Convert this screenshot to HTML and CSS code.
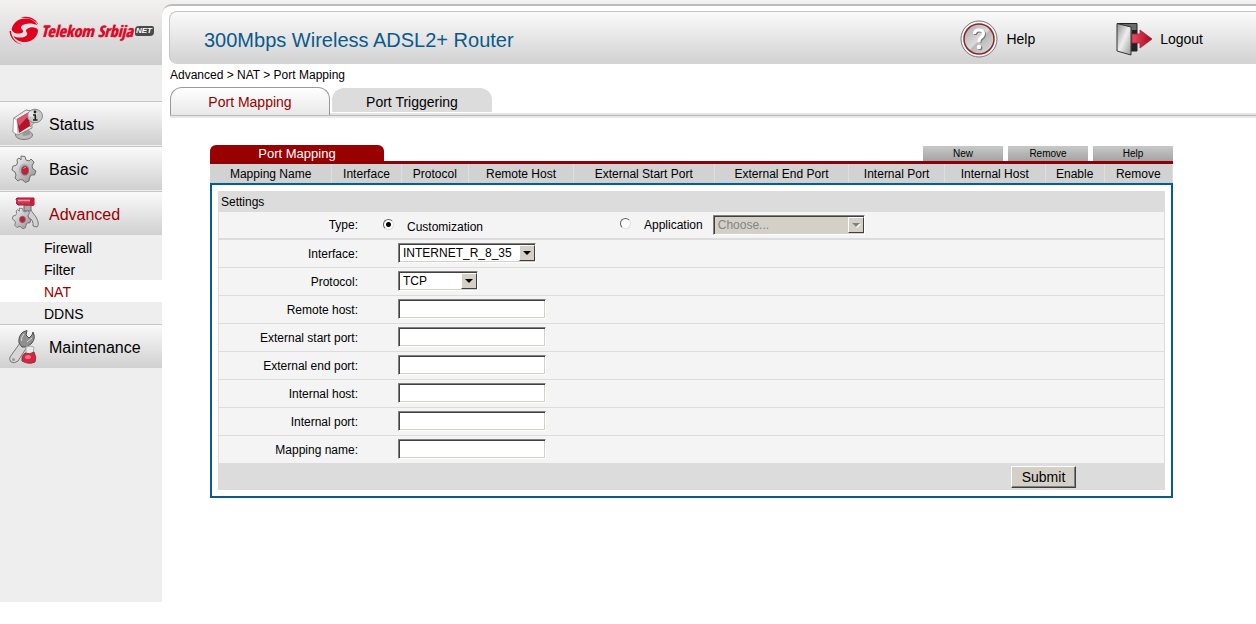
FILE: index.html
```html
<!DOCTYPE html>
<html lang="en">
<head>
<meta charset="utf-8">
<meta name="viewport" content="width=device-width, initial-scale=1">
<title>300Mbps Wireless ADSL2+ Router</title>
<link rel="stylesheet" href="styles.css">
</head>
<body>
<div class="page">
  <aside class="sidebar">
    <a class="logo" href="#">
      <svg class="logo-mark" width="31" height="30" viewBox="0 0 31 30" aria-hidden="true">
        <path fill="#e2001f" d="M2.500 13.500C4 7 9 2.500 16 2.500C22 2.500 26 5 28 9C23 6.500 15 7 12.500 10C10.500 13 16 14 13.500 16.500C11 18.500 4 18 2.500 13.500Z"/>
        <path fill="#e2001f" d="M29 14C29 20 24 25.500 17 26C11 26.500 6 23.500 4.500 20C9 22.500 16 22 18 19C19.500 16 15 15.500 18 13C21 10.500 27.500 10.500 29 14Z"/>
        <path fill="#e2001f" d="M.5 15C1 22 6 27.500 13.500 28.800C7 26.500 2.500 22 2 15ZM11 2C18-1 27 2 29.500 9C26.500 4.500 19 1 11 2Z"/>
      </svg>
      <span class="logo-name">Telekom Srbija</span>
      <span class="logo-net">NET</span>
    </a>
    <nav class="menu">
      <a class="menu-item" href="#">
        <svg width="34" height="34" viewBox="0 0 34 34" aria-hidden="true">
          <ellipse cx="15" cy="28" rx="8.500" ry="4.500" fill="#bdbdbd" stroke="#777"/>
          <path d="M13 24L20 21L21 28L14 29Z" fill="#999"/>
          <path d="M5 11L17 3L22 4L23 21L9 28L4 25Z" fill="#eee" stroke="#888"/>
          <path d="M4.500 11L8 13L9 28L4 25Z" fill="#fff" stroke="#999" stroke-width=".7"/>
          <path d="M8 12L20 5L21 19L10 26Z" fill="#b3142a"/>
          <path d="M8 12L20 5L20.300 8L10 19Z" fill="#d9566c"/>
          <path d="M22 14L21 20L26 15Z" fill="#c4c4c4" stroke="#888" stroke-width=".7"/>
          <ellipse cx="26" cy="9" rx="7.500" ry="6.800" fill="#c9c9c9" stroke="#888"/>
          <ellipse cx="24" cy="7" rx="4.500" ry="3" fill="#e6e6e6"/>
          <circle cx="26" cy="5" r="1.400" fill="#222"/>
          <path d="M24 8H26.300V12.500M24 13H28.500" stroke="#222" stroke-width="1.600" fill="none"/>
        </svg>
        <span>Status</span></a>
      <a class="menu-item" href="#">
        <svg width="34" height="34" viewBox="0 0 34 34" aria-hidden="true">
          <defs><linearGradient id="steel" x1="0" y1="0" x2="1" y2="1"><stop offset="0" stop-color="#fafafa"/><stop offset=".5" stop-color="#c4c4c4"/><stop offset="1" stop-color="#8c8c8c"/></linearGradient></defs>
          <path fill="url(#steel)" stroke="#707070" d="M12 4L16 4.500L17 8L20 9L22 7L25 10L23 14L24 17L27 19L25.500 23L22 23L20.500 26L20 29L16 30.500L14 28L11.500 27.500L9 29L6 26L7 23L6 20L3 18L4 14L7 13.500L8.500 11L8 7.500L10 6L12 8Z"/>
          <ellipse cx="15.500" cy="18" rx="5.500" ry="6.500" fill="#b2b2b2"/>
          <ellipse cx="16" cy="18.500" rx="3.500" ry="4.500" fill="#bd2236" stroke="#82646a"/>
          <path d="M14.500 17Q15 15 17 15.500" stroke="#ef8894" fill="none"/>
        </svg>
        <span>Basic</span></a>
      <a class="menu-item active" href="#">
        <svg width="34" height="34" viewBox="0 0 34 34" aria-hidden="true">
          <path d="M17 12L21 12L27 20Q31 27 28 30L24 29Q25 23 19 20Z" fill="#d2d2d2" stroke="#777"/>
          <rect x="15" y="8" width="7" height="6" rx="1" fill="#aaa" stroke="#666"/>
          <path d="M8 4Q6 2 8 1H25V8H9Q6 6 8 4Z" fill="#d92d4c" stroke="#9d1931"/>
          <path d="M9 3.500H23" stroke="#f59dab" stroke-width="1.500"/>
          <rect x="21" y="1" width="4" height="8" rx="1" fill="#c31f3b"/>
          <g transform="translate(1 8) scale(.78)">
            <path fill="url(#steel)" stroke="#666" d="M12 4L16 4.500L17 8L20 9L22 7L25 10L23 14L24 17L27 19L25.500 23L22 23L20.500 26L20 29L16 30.500L14 28L11.500 27.500L9 29L6 26L7 23L6 20L3 18L4 14L7 13.500L8.500 11L8 7.500L10 6L12 8Z"/>
            <ellipse cx="16" cy="18.500" rx="3.700" ry="4.200" fill="#c21f39" stroke="#82646a"/>
          </g>
        </svg>
        <span>Advanced</span></a>
      <ul class="submenu">
        <li><a href="#">Firewall</a></li>
        <li><a href="#">Filter</a></li>
        <li class="current"><a href="#">NAT</a></li>
        <li><a href="#">DDNS</a></li>
      </ul>
      <a class="menu-item" href="#">
        <svg width="34" height="34" viewBox="0 0 34 34" aria-hidden="true">
          <path d="M11 13L18 17L9 31Q5 34 2 32Q0 30 1 27Z" fill="#d6d6d6" stroke="#777"/>
          <path d="M10 13Q9 6 14 2L18 .5L17 5L20 8L23 5L24 2Q27 8 23 13L18 17L13 17Z" fill="#8f8f8f" stroke="#4e4e4e"/>
          <path d="M12.500 11Q12 7 15 4M18 12L23 8" stroke="#ddd" fill="none"/>
          <circle cx="4.500" cy="29.500" r="1.500" fill="#999"/>
          <path d="M17 17Q21 15 25 17L24 25H17Z" fill="#e9e9e9" stroke="#aaa"/>
          <path d="M16 23Q21 25 25 22Q28 28 26 32Q20 35 13 31Q12 26 16 23Z" fill="#d6253f" stroke="#8e3541"/>
          <ellipse cx="19" cy="27" rx="3" ry="2" fill="#ef7182"/>
        </svg>
        <span>Maintenance</span></a>
    </nav>
  </aside>

  <main class="main">
    <header class="header">
      <h1 class="title">300Mbps Wireless ADSL2+ Router</h1>
      <a class="action help" href="#">
        <svg width="38" height="38" viewBox="0 0 38 38" aria-hidden="true">
          <defs><linearGradient id="disc" x1="0" y1="0" x2="1" y2="1"><stop offset="0" stop-color="#a8a8a8"/><stop offset=".5" stop-color="#dadada"/><stop offset=".55" stop-color="#b8b8b8"/><stop offset="1" stop-color="#e2e2e2"/></linearGradient></defs>
          <circle cx="19" cy="19" r="18" fill="#f8f8f8" stroke="#777"/>
          <circle cx="19" cy="19" r="15" fill="url(#disc)" stroke="#8b252b" stroke-width="1.500"/>
          <path d="M15.500 15Q15.500 11 20 11Q24.500 11 24.500 14.500Q24.500 17 21.500 19Q20 20 20 23" fill="none" stroke="#777" stroke-width="3"/>
          <path d="M14.500 14Q14.500 10 19 10Q23.500 10 23.500 13.500Q23.500 16 20.500 18Q19 19 19 22.500" fill="none" stroke="#fff" stroke-width="3"/>
          <circle cx="20" cy="28" r="2.300" fill="#777"/><circle cx="19" cy="27" r="2.200" fill="#fff"/>
        </svg>
        Help</a>
      <a class="action" href="#">
        <svg width="38" height="34" viewBox="0 0 38 34" aria-hidden="true">
          <defs><linearGradient id="door" x1="0" y1="0" x2="1" y2="1"><stop offset="0" stop-color="#909090"/><stop offset=".5" stop-color="#eee"/><stop offset="1" stop-color="#999"/></linearGradient><linearGradient id="arrow"><stop offset="0" stop-color="#ee4b66"/><stop offset="1" stop-color="#a3061d"/></linearGradient></defs>
          <path d="M1 1.500H21V29H12V5Z" fill="#6b6b6b" stroke="#222"/>
          <path d="M16 8H21V29H15Z" fill="#222"/>
          <path d="M1 1.500L15 5V33L1 29Z" fill="url(#door)" stroke="#333"/>
          <path d="M16 12H24V8L36 17L24 26V21H16Z" fill="url(#arrow)" stroke="#a92438" stroke-width=".8"/>
        </svg>
        Logout</a>
    </header>

    <div class="breadcrumb">Advanced &gt; NAT &gt; Port Mapping</div>

    <nav class="tabs">
      <a class="tab selected" href="#">Port Mapping</a>
      <a class="tab" href="#">Port Triggering</a>
    </nav>

    <section class="panel">
      <div class="panel-top">
        <h2 class="panel-title">Port Mapping</h2>
        <div class="panel-buttons">
          <button type="button">New</button>
          <button type="button">Remove</button>
          <button type="button">Help</button>
        </div>
      </div>
      <table class="mappings">
        <colgroup>
          <col class="c-name"><col class="c-interface"><col class="c-protocol"><col class="c-remote"><col class="c-start"><col class="c-end"><col class="c-port"><col class="c-host"><col class="c-enable"><col class="c-remove">
        </colgroup>
        <thead>
          <tr><th>Mapping Name</th><th>Interface</th><th>Protocol</th><th>Remote Host</th><th>External Start Port</th><th>External End Port</th><th>Internal Port</th><th>Internal Host</th><th>Enable</th><th>Remove</th></tr>
        </thead>
      </table>

      <form class="settings">
        <div class="settings-body">
          <h3 class="settings-title">Settings</h3>
          <div class="row type-row">
            <span class="label">Type:</span>
            <label class="choice custom"><input type="radio" name="type" checked><span>Customization</span></label>
            <label class="choice"><input type="radio" name="type" id="application"><span>Application</span></label>
            <span class="select wide disabled">
              <select aria-label="Application" disabled><option>Choose...</option></select>
              <svg class="arrow" viewBox="0 0 14 14" aria-hidden="true"><path d="M4 6H12L8 10Z" fill="#fff"/><path d="M3 5H11L7 9Z" fill="#808080"/></svg>
            </span>
          </div>
          <div class="row">
            <label class="label" for="interface">Interface:</label>
            <span class="select medium">
              <select id="interface"><option>INTERNET_R_8_35</option></select>
              <svg class="arrow" viewBox="0 0 14 14" aria-hidden="true"><path d="M3 5H11L7 9Z"/></svg>
            </span>
          </div>
          <div class="row">
            <label class="label" for="protocol">Protocol:</label>
            <span class="select narrow">
              <select id="protocol"><option>TCP</option><option>UDP</option></select>
              <svg class="arrow" viewBox="0 0 14 14" aria-hidden="true"><path d="M3 5H11L7 9Z"/></svg>
            </span>
          </div>
          <div class="row"><label class="label" for="remote-host">Remote host:</label><input class="text" type="text" id="remote-host"></div>
          <div class="row"><label class="label" for="start-port">External start port:</label><input class="text" type="text" id="start-port"></div>
          <div class="row"><label class="label" for="end-port">External end port:</label><input class="text" type="text" id="end-port"></div>
          <div class="row"><label class="label" for="internal-host">Internal host:</label><input class="text" type="text" id="internal-host"></div>
          <div class="row"><label class="label" for="internal-port">Internal port:</label><input class="text" type="text" id="internal-port"></div>
          <div class="row last"><label class="label" for="mapping-name">Mapping name:</label><input class="text" type="text" id="mapping-name"></div>
          <div class="settings-footer"><button class="submit" type="button">Submit</button></div>
        </div>
      </form>
    </section>
  </main>
</div>
</body>
</html>
```

FILE: styles.css
```css
* {
  box-sizing: border-box;
}

body {
  margin: 0;
  background: #fff;
  color: #000;
  font-family: "Liberation Sans", Arial, sans-serif;
  font-size: 12px;
}

a {
  color: inherit;
  text-decoration: none;
}

h1, h2, h3 {
  margin: 0;
  font-weight: normal;
}

.page {
  display: flex;
  align-items: stretch;
  min-height: 602px;
  background: linear-gradient(#f4f1f1, #cdcdcd) 0 0 / 100% 65px no-repeat;
}

/* Sidebar */
.sidebar {
  flex: 0 0 162px;
  min-width: 0;
  background: linear-gradient(#f4f1f1, #cdcdcd) 0 0 / 100% 65px no-repeat #eee;
}

.logo {
  display: flex;
  align-items: center;
  gap: 1px;
  height: 65px;
  padding: 0 0 3px 9px;
}

.logo-mark {
  flex: none;
}

.logo-name {
  color: #dc0a2a;
  font: italic bold 16px "Liberation Sans Narrow", "Arial Narrow", "Open Sans Condensed", "Liberation Sans", sans-serif;
  text-shadow: 0 0 1px #dc0a2a;
  white-space: nowrap;
}

.logo-net {
  margin-left: 1px;
  padding: 0 2px 0 1px;
  border-radius: 4px 2px;
  background: #4a4a4a;
  color: #fff;
  font: italic bold 8px/10px "Liberation Sans", Arial, sans-serif;
}

.menu {
  padding-top: 36px;
}

.menu-item {
  display: flex;
  align-items: center;
  gap: 6px;
  height: 45px;
  padding: 1px 0 0 9px;
  border-top: 1px solid #c6c6c6;
  border-bottom: 1px solid #eee;
  background: linear-gradient(#fafafa, #d0d0d0);
  font-size: 16px;
}

.menu-item span {
  padding-top: 2px;
}

.active,
.current {
  color: #990000;
}

.submenu {
  margin: 0;
  padding: 0;
  list-style: none;
  font-size: 14px;
  line-height: 22px;
}

.submenu li {
  padding-top: 1px;
  padding-left: 44px;
  height: 22px;
}

.submenu .current {
  background: #fff;
}

/* Main column */
.main {
  flex: 1;
  min-width: 0;
  margin-top: 4px;
  padding: 5px 0 0 7px;
  border-top: 2px solid #bcbcbc;
  border-top-left-radius: 10px;
  background: #fff;
}

.header {
  display: flex;
  align-items: center;
  height: 53px;
  padding: 0 53px 0 34px;
  border: 1px solid #c6c6c6;
  border-right: 0;
  border-bottom: 2px solid #d4d4d4;
  border-radius: 8px 0 0 8px;
  background: linear-gradient(#fafafa, #d3d3d3);
}

.title {
  flex: 1;
  padding-top: 6px;
  color: #0b5a8c;
  font-size: 20px;
}

.action {
  display: flex;
  align-items: center;
  gap: 6px;
  padding-top: 3px;
  font-size: 14px;
}

.help {
  gap: 8px;
  margin-right: 81px;
}

.breadcrumb {
  padding: 4px 0 0 1px;
  line-height: 15px;
}

.tabs {
  display: flex;
  gap: 2px;
  margin: 4px 0 0 1px;
  border-bottom: 2px solid #e4e4e4;
  box-shadow: 0 1px 0 #b8b8b8, 0 3px 0 #e8e8e8;
}

.tab {
  width: 160px;
  height: 24px;
  margin: 1px 0;
  padding-top: 2px;
  border-radius: 12px 12px 0 0;
  background: #dcdcdc;
  font-size: 14px;
  line-height: 24px;
  text-align: center;
}

.tab.selected {
  height: 28px;
  margin: 0 0 -2px;
  border: 1px solid #999;
  border-bottom: 0;
  background: linear-gradient(#fff, #e8e8e8);
  color: #990000;
}

/* Mapping panel */
.panel {
  margin: 30px 83px 0 41px;
}

.panel-top {
  display: flex;
  align-items: flex-end;
  justify-content: space-between;
  border-bottom: 3px solid #8c0008;
}

.panel-title {
  width: 174px;
  height: 16px;
  border-radius: 6px 6px 0 0;
  background: #990000;
  color: #fff;
  font-size: 13px;
  line-height: 17px;
  text-align: center;
}

.panel-buttons {
  display: flex;
  gap: 5px;
}

.panel-buttons button {
  width: 80px;
  height: 15px;
  padding: 0;
  border: 0;
  background: linear-gradient(#c8c8c8, #a4a4a4);
  color: #000;
  font: 10px/15px "Liberation Sans", Arial, sans-serif;
}

.mappings {
  width: 100%;
  table-layout: fixed;
  border-collapse: separate;
  border-spacing: 0;
  background: #d2d2d2;
}

.mappings th {
  height: 19px;
  padding: 2px 0 0;
  border-right: 1px solid #dedede;
  border-bottom: 1px solid #b9d5e4;
  font-weight: normal;
  white-space: nowrap;
}

.c-name { width: 12.7%; }
.c-interface { width: 7.2%; }
.c-protocol { width: 7%; }
.c-remote { width: 10.9%; }
.c-start { width: 14.6%; }
.c-end { width: 14%; }
.c-port { width: 9.9%; }
.c-host { width: 10.5%; }
.c-enable { width: 6.1%; }
.c-remove { width: 7.1%; }

.settings {
  padding: 6px;
  border: 2px solid #0b5c8a;
}

.settings-body {
  border: solid #dcdcdc;
  border-width: 0 1px;
  background: #f4f4f4;
}

.settings-title {
  padding: 1px 2px 0;
  height: 21px;
  background: #dcdcdc;
  font-size: 12px;
  line-height: 20px;
}

.row {
  display: flex;
  align-items: flex-start;
  height: 28px;
  padding-top: 3px;
  border-bottom: 1px solid #dcdcdc;
}

.row.last {
  height: 27px;
  border-bottom: 0;
}

.row.type-row {
  align-items: center;
  padding-top: 0;
  border-bottom-width: 2px;
}

.label {
  width: 139px;
  margin-right: 40px;
  line-height: 22px;
  text-align: right;
}

.type-row .label {
  margin-right: 25px;
}

.choice {
  display: flex;
  align-items: center;
  gap: 13px;
}

.choice input {
  appearance: none;
  width: 11px;
  height: 11px;
  margin: 0 0 4px;
  border: 1px solid;
  border-color: #606060 #ddd #ddd #606060;
  border-radius: 50%;
  background: #fff;
}

.choice input:checked {
  background: radial-gradient(circle, #000 2px, #fff 3px);
}

.custom {
  width: 237px;
  padding-top: 3px;
}

.select {
  position: relative;
  display: block;
  height: 20px;
}

.medium { width: 138px; }
.narrow { width: 80px; }
.wide {
  width: 152px;
  margin-left: 10px;
}

.select select,
.text {
  width: 100%;
  height: 20px;
  padding: 0 4px;
  border: 1px solid;
  border-color: #808080 #fff #fff #808080;
  border-radius: 0;
  box-shadow: inset 1px 1px 0 #404040, inset -1px -1px 0 #d4d0c8;
  background: #fff;
  color: #000;
  font: 12px "Liberation Sans", Arial, sans-serif;
}

.select select {
  appearance: none;
}

.text {
  width: 148px;
}

.disabled select {
  background: #d4d0c8;
  color: #848484;
  opacity: 1;
}

.arrow {
  position: absolute;
  top: 2px;
  right: 1px;
  width: 16px;
  height: 16px;
  border: 1px solid;
  border-color: #fff #404040 #404040 #fff;
  background: #d4d0c8;
  pointer-events: none;
}

.settings-footer {
  display: flex;
  align-items: center;
  justify-content: flex-end;
  height: 27px;
  padding-right: 88px;
  background: #dcdcdc;
}

.submit {
  width: 65px;
  height: 22px;
  padding: 0;
  border: 1px solid;
  border-color: #fff #404040 #404040 #fff;
  box-shadow: inset -1px -1px 0 #808080;
  background: #d4d0c8;
  color: #000;
  font: 14px "Liberation Sans", Arial, sans-serif;
}
```
